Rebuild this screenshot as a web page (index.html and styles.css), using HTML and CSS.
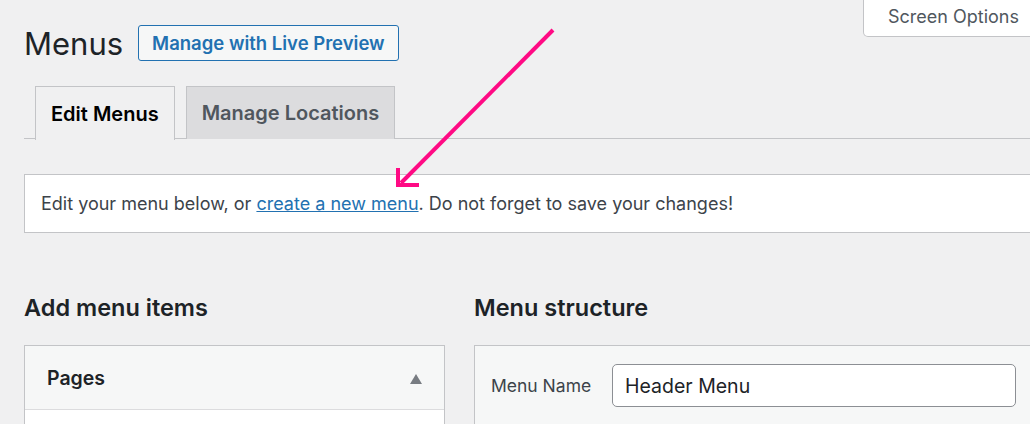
FILE: index.html
```html
<!DOCTYPE html>
<html lang="en">
<head>
    <meta charset="UTF-8">
    <title>Menus</title>
    <link rel="stylesheet" href="styles.css">
</head>
<body>
    <div class="screen-meta">
        <button class="screen-options">Screen Options</button>
    </div>
    <div class="wrap">
        <div class="title-row">
            <h1>Menus</h1>
            <a class="live-btn" href="#">Manage with Live Preview</a>
        </div>

        <div class="tabs">
            <a class="tab active" href="#">Edit Menus</a>
            <a class="tab" href="#">Manage Locations</a>
        </div>

        <div class="notice">
            <p>Edit your menu below, or <a href="#">create a new menu</a>. Do not forget to save your changes!</p>
        </div>

        <div class="columns">
            <div class="col-left">
                <h2>Add menu items</h2>
                <div class="accordion">
                    <div class="accordion-head">
                        <span>Pages</span>
                        <span class="caret"></span>
                    </div>
                    <div class="accordion-body"></div>
                </div>
            </div>
            <div class="col-right">
                <h2>Menu structure</h2>
                <div class="menu-box">
                    <label for="menu-name">Menu Name</label>
                    <input type="text" id="menu-name" value="Header Menu">
                </div>
            </div>
        </div>
    </div>

    <!-- annotation arrow -->
    <svg class="arrow" width="1030" height="424" viewBox="0 0 1030 424">
        <line x1="553" y1="30" x2="401" y2="183" stroke="#ff0a84" stroke-width="4"/>
        <polyline points="398,168 398,185 419,185" fill="none" stroke="#ff0a84" stroke-width="4"/>
    </svg>
</body>
</html>
```

FILE: styles.css
```css
html, body {
    margin: 0;
    height: 424px;
    overflow: hidden;
}
body {
    font-family: Inter, Roboto, sans-serif;
    background-color: #f0f0f1;
    color: #1d2327;
    position: relative;
}
.screen-meta {
    float: right;
    margin-right: -10px;
}
.screen-options {
    font-family: inherit;
    font-size: 18px;
    color: #50575e;
    background-color: #fff;
    border: 1px solid #c3c4c7;
    border-top: none;
    border-radius: 0 0 0 5px;
    height: 37px;
    width: 177px;
    padding: 0 0 4px 24px;
    text-align: left;
    white-space: nowrap;
}
.wrap {
    padding-left: 24px;
    margin-right: -30px;
}
.title-row {
    display: flex;
    align-items: center;
    gap: 15px;
    padding-top: 25px;
    height: 36px;
}
h1 {
    font-size: 31px;
    font-weight: 400;
    margin: 0;
    color: #1d2327;
}
.live-btn {
    display: flex;
    align-items: center;
    height: 34px;
    padding: 0 13px;
    border: 1px solid #2271b1;
    border-radius: 3px;
    background-color: #f6f7f7;
    color: #2271b1;
    font-size: 18.5px;
    font-weight: 600;
    text-decoration: none;
}
.tabs {
    display: flex;
    gap: 11px;
    margin-top: 25px;
    padding-left: 11px;
    border-bottom: 1px solid #c3c4c7;
    height: 52px;
}
.tab {
    display: flex;
    align-items: center;
    padding: 0 15px;
    border: 1px solid #c3c4c7;
    border-bottom: none;
    background-color: #dcdcde;
    color: #50575e;
    font-size: 20px;
    font-weight: 600;
    text-decoration: none;
    height: 52px;
}
.tab.active {
    background-color: #f0f0f1;
    color: #000;
    height: 53px;
}
.notice {
    margin-top: 35px;
    background-color: #fff;
    border: 1px solid #c3c4c7;
    height: 57px;
    display: flex;
    align-items: center;
    padding-left: 16px;
}
.notice p {
    margin: 0;
    font-size: 18px;
    color: #3c434a;
}
.notice a {
    color: #2271b1;
}
.columns {
    display: flex;
    gap: 29px;
    margin-top: 60px;
}
.col-left {
    width: 421px;
    flex: none;
}
.col-right {
    flex: 1;
}
h2 {
    font-size: 23.5px;
    font-weight: 600;
    margin: 0 0 23px;
    height: 29px;
    line-height: 29px;
}
.accordion {
    border: 1px solid #c3c4c7;
    background-color: #fff;
}
.accordion-head {
    display: flex;
    justify-content: space-between;
    align-items: center;
    height: 63px;
    padding: 0 22px;
    background-color: #f6f7f7;
    border-bottom: 1px solid #dcdcde;
    font-size: 19.5px;
    font-weight: 600;
}
.caret {
    width: 0;
    height: 0;
    border-left: 6.5px solid transparent;
    border-right: 6.5px solid transparent;
    border-bottom: 10px solid #787c82;
    margin-top: 2px;
}
.accordion-body {
    height: 40px;
}
.menu-box {
    display: flex;
    align-items: center;
    border: 1px solid #c3c4c7;
    background-color: #f6f7f7;
    padding: 18px 0 40px 16px;
}
.menu-box label {
    font-size: 17.5px;
    color: #3c434a;
    white-space: nowrap;
    width: 121px;
    flex: none;
}
.menu-box input {
    font-family: inherit;
    font-size: 19.5px;
    color: #1d2327;
    width: 404px;
    flex: none;
    height: 43px;
    box-sizing: border-box;
    padding: 0 12px;
    border: 1px solid #8c8f94;
    border-radius: 5px;
    background-color: #fff;
}
.arrow {
    position: absolute;
    top: 0;
    left: 0;
    pointer-events: none;
}
```
